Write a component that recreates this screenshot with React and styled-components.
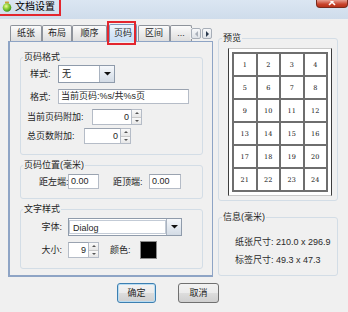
import React from 'react'
import styled, { createGlobalStyle, css } from 'styled-components'

const GlobalStyle = createGlobalStyle`
  html, body {
    margin: 0;
    padding: 0;
    background: #f0f0f0;
  }
  body {
    font-family: "Liberation Sans", "Noto Sans CJK SC", sans-serif;
    font-size: 9px;
    color: #1e1e1e;
  }
`

const Window = styled.div`
  position: relative;
  width: 348px;
  height: 312px;
  overflow: hidden;
  background: #f0f0f0;
  display: flex;
  flex-direction: column;
`

const TitleBar = styled.div`
  position: relative;
  height: 19px;
  flex: none;
  display: flex;
  align-items: flex-start;
  padding-left: 2px;
  background: linear-gradient(#dbe6f2, #cfdceb);
`

const AppIcon = styled.svg`
  margin-top: 1px;
  flex: none;
`

const Title = styled.span`
  margin: 1px 0 0 3px;
  font-size: 10px;
  line-height: 12px;
  color: #000;
`

const RedMark = styled.div`
  position: absolute;
  border: 2px solid #e3262e;
  pointer-events: none;
  ${p => css`
    left: ${p.$l}px;
    top: ${p.$t}px;
    width: ${p.$w}px;
    height: ${p.$h}px;
  `}
`

const CloseButton = styled.div`
  margin-left: auto;
  width: 32px;
  height: 8px;
  box-sizing: border-box;
  border-radius: 0 0 4px 4px;
  background: linear-gradient(#e8a093, #c8432c 60%, #b83219);
  border: 1px solid #7a2a1c;
  border-top: none;
  display: flex;
  justify-content: center;
  align-items: flex-end;
  overflow: hidden;
`

const Body = styled.div`
  display: flex;
  gap: 5px;
  padding: 4px 0 0 8px;
`

const LeftCol = styled.div`
  width: 205px;
  height: 254px;
  display: flex;
  flex-direction: column;
`

const TabRow = styled.div`
  position: relative;
  height: 18px;
  flex: none;
  display: flex;
  align-items: flex-end;
  padding-left: 2px;
  z-index: 1;
`

const Tab = styled.div`
  position: relative;
  box-sizing: border-box;
  width: ${p => p.$w}px;
  margin-left: ${p => p.$ml || 0}px;
  height: 16px;
  border: 1px solid #8e939b;
  border-bottom: none;
  border-radius: 2px 2px 0 0;
  background: linear-gradient(#fbfbfb, #e9e9e9 60%, #dedede);
  text-align: center;
  line-height: 15px;
  white-space: nowrap;
  overflow: hidden;
  ${p => p.$active && css`
    height: 18px;
    margin-bottom: -1px;
    line-height: 16px;
    background: linear-gradient(#eef5fc, #d6e6f7 55%, #c9def5);
    border-color: #7d98bd;
    overflow: visible;
  `}
`

const TabScroll = styled.div`
  position: absolute;
  right: 1px;
  bottom: 2px;
  display: flex;
  gap: 1px;
  background: #f0f0f0;
  padding-left: 1px;
`

const ScrollButton = styled.div`
  width: 10px;
  height: 11px;
  box-sizing: border-box;
  border: 1px solid #a7aeb8;
  border-radius: 2px;
  background: linear-gradient(#f7f8fa, #dfe3e8);
  display: flex;
  align-items: center;
  justify-content: center;
`

const Panel = styled.div`
  flex: 1;
  box-sizing: border-box;
  border: 1px solid #8ea4c5;
  border-left-width: 2px;
  border-bottom-width: 2px;
  padding: 9px 9px 0 10px;
  background: #f0f0f0;
`

const Group = styled.fieldset`
  margin: ${p => p.$mt || 0}px 0 0;
  padding: 0;
  border: 1px solid #d3dde6;
  border-radius: 3px;
  min-width: 0;
`

const GroupTitle = styled.legend`
  margin-left: ${p => p.$ml || 2}px;
  padding: 0 1px;
  font-size: 9px;
  line-height: 12px;
  color: #1e1e1e;
`

const GroupBody = styled.div`
  display: flex;
  flex-direction: column;
  padding: ${p => p.$pad};
`

const Row = styled.div`
  display: flex;
  align-items: center;
  height: ${p => p.$h}px;
  margin-top: ${p => p.$mt || 0}px;
  margin-left: ${p => p.$ml || 0}px;
`

const Label = styled.span`
  flex: none;
  width: ${p => p.$w}px;
  margin-left: ${p => p.$ml || 0}px;
  text-align: ${p => p.$right ? 'right' : 'left'};
  padding-right: ${p => p.$right ? 6 : 0}px;
  box-sizing: border-box;
  white-space: nowrap;
  line-height: 12px;
`

const Field = styled.div`
  box-sizing: border-box;
  width: ${p => p.$w}px;
  height: ${p => p.$h}px;
  background: #fff;
  border: 1px solid #b5bcc7;
  border-top-color: #9aa3b0;
  padding: 0 2px;
  line-height: ${p => p.$h - 2}px;
  white-space: nowrap;
  overflow: hidden;
  text-align: ${p => p.$right ? 'right' : 'left'};
`

const Combo = styled.div`
  display: flex;
  width: ${p => p.$w}px;
  height: 18px;
  box-sizing: border-box;
  border: 1px solid #8f9bab;
  background: #fff;
`

const ComboText = styled.div`
  flex: 1;
  padding-left: 3px;
  line-height: 16px;
  ${p => p.$tight && css`
    margin: 1px 0;
    line-height: 14px;
    border: 1px solid #c3cbd6;
  `}
`

const ComboButton = styled.div`
  width: 14px;
  flex: none;
  border-left: 1px solid #a9b3c0;
  background: linear-gradient(#f6f8fb, #e3e9f0 50%, #d3dbe5);
  display: flex;
  align-items: center;
  justify-content: center;
`

const Spinner = styled.div`
  display: flex;
  height: 16px;
`

const SpinButtons = styled.div`
  width: 10px;
  display: flex;
  flex-direction: column;
  border: 1px solid #b5bcc7;
  border-left: none;
  box-sizing: border-box;
`

const SpinButton = styled.div`
  flex: 1;
  background: linear-gradient(#fafafa, #e6e6e6);
  display: flex;
  align-items: center;
  justify-content: center;
  & + & {
    border-top: 1px solid #c9c9c9;
  }
`

const ColorSwatch = styled.div`
  width: 17px;
  height: 18px;
  box-sizing: border-box;
  background: #000;
  border: 1px solid #8a8a8a;
`

const RightCol = styled.div`
  width: 120px;
  margin-top: 9px;
  display: flex;
  flex-direction: column;
`

const Paper = styled.div`
  box-sizing: border-box;
  width: 104px;
  padding: 3px;
  background: #fff;
  border: 1px solid #c8c8c8;
  border-left-color: #3d3d3d;
  border-right-color: #3d3d3d;
`

const PageGrid = styled.div`
  display: grid;
  grid-template-columns: repeat(4, 1fr);
  grid-auto-rows: 23px;
  border-top: 2px solid #6e6e6e;
  border-left: 2px solid #6e6e6e;
`

const Cell = styled.div`
  border-right: 2px solid #6e6e6e;
  border-bottom: 2px solid #6e6e6e;
  display: flex;
  align-items: center;
  justify-content: center;
  font-family: "DejaVu Serif", "Liberation Serif", serif;
  font-size: 6.5px;
  color: #111;
`

const InfoLine = styled.div`
  line-height: 12px;
  margin-top: ${p => p.$mt || 0}px;
  color: #2a2a2a;
  white-space: nowrap;
`

const ButtonRow = styled.div`
  display: flex;
  gap: 22px;
  padding: 6px 0 0 117px;
`

const Button = styled.div`
  box-sizing: border-box;
  width: ${p => p.$w}px;
  height: 20px;
  border: 1px solid #707070;
  border-radius: 3px;
  background: linear-gradient(#f2f2f2, #ebebeb 50%, #dddddd 51%, #cfcfcf);
  text-align: center;
  line-height: 18px;
  ${p => p.$primary && css`
    border-color: #3c7fb1;
    box-shadow: inset 0 0 0 1px #b8dcf2;
  `}
`

const Arrow = ({ dir = 'down', color = '#111', size = 7 }) => {
  const pts = {
    down: '0,0 6,0 3,3',
    up: '0,3 6,3 3,0',
    left: '3,0 3,6 0,3',
    right: '0,0 0,6 3,3',
  }[dir]
  const side = dir === 'left' || dir === 'right'
  return (
    <svg width={side ? size / 2 : size} height={side ? size : size / 2} viewBox={side ? '0 0 3 6' : '0 0 6 3'}>
      <polygon points={pts} fill={color} />
    </svg>
  )
}

const NumberSpinner = ({ width, value }) => (
  <Spinner>
    <Field $w={width} $h={16} $right>{value}</Field>
    <SpinButtons>
      <SpinButton><Arrow dir="up" size={4} color="#555" /></SpinButton>
      <SpinButton><Arrow dir="down" size={4} color="#555" /></SpinButton>
    </SpinButtons>
  </Spinner>
)

const tabs = [
  { label: '纸张', w: 32 },
  { label: '布局', w: 30 },
  { label: '顺序', w: 35 },
  { label: '页码', w: 28, ml: 2, active: true },
  { label: '区间', w: 32, ml: 1 },
  { label: '...', w: 22 },
]

const pages = Array.from({ length: 24 }, (_, i) => i + 1)

export default function App() {
  return (
    <Window>
      <GlobalStyle />
      <TitleBar>
        <AppIcon width="10" height="11" viewBox="0 0 10 11">
          <defs>
            <radialGradient id="orb" cx="0.4" cy="0.35" r="0.7">
              <stop offset="0" stopColor="#f4f7a0" />
              <stop offset="0.45" stopColor="#8fd13a" />
              <stop offset="1" stopColor="#2f8a1c" />
            </radialGradient>
          </defs>
          <rect x="3" y="0.5" width="4" height="2" rx="0.6" fill="#c9a23a" />
          <circle cx="5" cy="6.5" r="4.3" fill="url(#orb)" />
        </AppIcon>
        <Title>文档设置</Title>
        <CloseButton>
          <svg width="8" height="6" viewBox="0 2 8 6">
            <path d="M1 0 L7 6 M7 0 L1 6" stroke="#fff" strokeWidth="1.6" />
          </svg>
        </CloseButton>
        <RedMark $l={-2} $t={-2} $w={59} $h={14} />
      </TitleBar>

      <Body>
        <LeftCol>
          <TabRow>
            {tabs.map(t => (
              <Tab key={t.label} $w={t.w} $ml={t.ml} $active={t.active}>
                {t.label}
                {t.active && <RedMark $l={-3} $t={-4} $w={25} $h={20} />}
              </Tab>
            ))}
            <TabScroll>
              <ScrollButton><Arrow dir="left" size={6} color="#a9b0ba" /></ScrollButton>
              <ScrollButton><Arrow dir="right" size={6} color="#2b3a4e" /></ScrollButton>
            </TabScroll>
          </TabRow>

          <Panel>
            <Group>
              <GroupTitle>页码格式</GroupTitle>
              <GroupBody $pad="2px 0 10px 9px">
                <Row $h={18}>
                  <Label $w={28}>样式:</Label>
                  <Combo $w={57}>
                    <ComboText>无</ComboText>
                    <ComboButton><Arrow /></ComboButton>
                  </Combo>
                </Row>
                <Row $h={15} $mt={6}>
                  <Label $w={28}>格式:</Label>
                  <Field $w={131} $h={15}>当前页码:%s/共%s页</Field>
                </Row>
                <Row $h={16} $mt={5} $ml={-3}>
                  <Label $w={65}>当前页码附加:</Label>
                  <NumberSpinner width={40} value="0" />
                </Row>
                <Row $h={16} $mt={3} $ml={-3}>
                  <Label $w={57}>总页数附加:</Label>
                  <NumberSpinner width={37} value="0" />
                </Row>
              </GroupBody>
            </Group>

            <Group $mt={4}>
              <GroupTitle>页码位置(毫米)</GroupTitle>
              <GroupBody $pad="3px 0 9px 18px">
                <Row $h={15}>
                  <Label $w={29}>距左端:</Label>
                  <Field $w={31} $h={15}>0.00</Field>
                  <Label $w={36} $ml={14}>距顶端:</Label>
                  <Field $w={32} $h={15}>0.00</Field>
                </Row>
              </GroupBody>
            </Group>

            <Group $mt={4}>
              <GroupTitle>文字样式</GroupTitle>
              <GroupBody $pad="3px 0 9px 0">
                <Row $h={18}>
                  <Label $w={47} $right>字体:</Label>
                  <Combo $w={114}>
                    <ComboText $tight>Dialog</ComboText>
                    <ComboButton><Arrow /></ComboButton>
                  </Combo>
                </Row>
                <Row $h={18} $mt={5}>
                  <Label $w={47} $right>大小:</Label>
                  <NumberSpinner width={21} value="9" />
                  <Label $w={30} $ml={11}>颜色:</Label>
                  <ColorSwatch />
                </Row>
              </GroupBody>
            </Group>
          </Panel>
        </LeftCol>

        <RightCol>
          <Group>
            <GroupTitle $ml={3}>预览</GroupTitle>
            <GroupBody $pad="4px 5px 4px 9px">
              <Paper>
                <PageGrid>
                  {pages.map(n => <Cell key={n}>{n}</Cell>)}
                </PageGrid>
              </Paper>
            </GroupBody>
          </Group>

          <Group $mt={10}>
            <GroupTitle $ml={3}>信息(毫米)</GroupTitle>
            <GroupBody $pad="13px 0 9px 16px">
              <InfoLine>纸张尺寸: 210.0 x 296.9</InfoLine>
              <InfoLine $mt={6}>标签尺寸: 49.3 x 47.3</InfoLine>
            </GroupBody>
          </Group>
        </RightCol>
      </Body>

      <ButtonRow>
        <Button $w={39} $primary>确定</Button>
        <Button $w={41}>取消</Button>
      </ButtonRow>
    </Window>
  )
}
